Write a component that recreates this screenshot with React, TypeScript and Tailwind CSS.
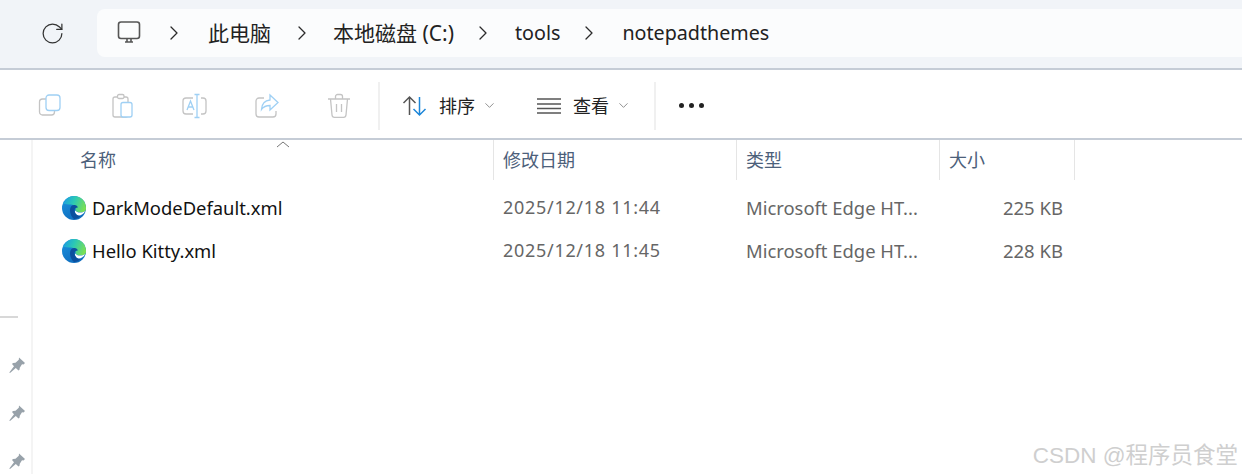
import { ChevronDown, ChevronRight, RotateCw } from "lucide-react";

const cjk = "font-['Noto_Sans','Noto_Sans_CJK_SC',sans-serif]";

const columns = [
  { label: "修改日期", width: "w-[243px]" },
  { label: "类型", width: "w-[203px]" },
  { label: "大小", width: "w-[135px]" },
];

const files = [
  { name: "DarkModeDefault.xml", date: "2025/12/18 11:44", size: "225 KB" },
  { name: "Hello Kitty.xml", date: "2025/12/18 11:45", size: "228 KB" },
];

const EdgeIcon = () => (
  <svg width="24" height="24" viewBox="0 0 24 24" className="shrink-0">
    <defs>
      <linearGradient id="edgeTop" x1="0" y1="0.3" x2="1" y2="0.6">
        <stop offset="0" stopColor="#1b9de2" />
        <stop offset="0.45" stopColor="#2cc9b4" />
        <stop offset="1" stopColor="#7ce052" />
      </linearGradient>
      <linearGradient id="edgeLeft" x1="0" y1="0" x2="0.6" y2="1">
        <stop offset="0" stopColor="#1b94e0" />
        <stop offset="1" stopColor="#0f6cbd" />
      </linearGradient>
    </defs>
    <circle cx="12" cy="12" r="12" fill="url(#edgeLeft)" />
    <path d="M1 8C3 3 7 0 12 0c7 0 12 5.500 12 12 0 1.500-.3 2.500-1 3.200-2.500 1.500-7 1.500-9.500-.5.800-3-1-6.200-4.500-6.200C6 8.500 3 8 1 8Z" fill="url(#edgeTop)" />
    <path d="M13 14.500C15 16.800 19.500 17.300 23 15.200c-1.200 3-5 4.800-7.500 4-1.800-.6-2.800-2.800-2.500-4.700Z" fill="#fff" />
    <path d="M8 14c0-3.500 2.500-5.500 5-5 1.800.3 2.700 1.500 2.800 2.500-2 0-3.300 1-3.300 3 0 2.800 2.500 5.300 6 5.800-2.200 1.800-4.300 3-6.500 2.700C9.500 21 8 17.800 8 14Z" fill="#0c4f9e" />
  </svg>
);

const PinIcon = () => (
  <svg width="16" height="16" viewBox="0 0 16 16" className="text-[#98a2aa]" fill="currentColor">
    <path d="M10 .5 16 6 14.500 7.500 13 7.200 10.800 10.800 10.500 12.800 9.500 13.500 6.800 11 1 16 .3 15.500 5 9.300 3 7 4 6 6.500 5.800 9.800 2.800Z" />
  </svg>
);

const ToolIcon = ({ children }: { children: React.ReactNode }) => (
  <div className="flex h-[48px] w-[72px] items-center justify-center">
    <svg width="26" height="26" viewBox="0 0 26 26" fill="none" strokeWidth="1.300">
      {children}
    </svg>
  </div>
);

const grey = "#c4c4c4";
const blue = "#9fd0f4";

const Crumb = ({ label, className }: { label: string; className: string }) => (
  <div className="flex items-center">
    <ChevronRight className="h-[24px] w-[24px] text-[#2b2b2b]" strokeWidth={1.300} />
    <span className={`leading-none text-[#222] ${className}`}>{label}</span>
  </div>
);

export default function App() {
  return (
    <div className={`relative flex h-[474px] w-[1242px] flex-col overflow-hidden bg-white ${cjk}`}>
      {/* address bar */}
      <div className="flex h-[70px] shrink-0 items-start border-b-2 border-[#c5ccd6] bg-[#f1f4f8] pt-[9px]">
        <div className="flex h-[48px] w-[97px] shrink-0 items-center justify-center pl-[7px]">
          <RotateCw className="h-[25px] w-[25px] text-[#333]" strokeWidth={1.200} />
        </div>
        <div className="flex h-[48px] flex-1 items-center rounded-l-lg bg-[#fbfcfd] pl-[20px]">
          <svg width="24" height="24" viewBox="0 0 24 24" fill="none" stroke="#555" strokeWidth="1.600">
            <rect x="1.500" y="1" width="21" height="16.500" rx="2.500" />
            <path d="M8 21h8M10 18v3M14 18v3" />
          </svg>
          <div className="ml-[21px]">
            <Crumb label="此电脑" className="ml-[22px] text-[21px]" />
          </div>
          <div className="ml-[19px]">
            <Crumb label="本地磁盘 (C:)" className="ml-[19px] text-[21px]" />
          </div>
          <div className="ml-[17px]">
            <Crumb label="tools" className="ml-[20px] text-[19.700px]" />
          </div>
          <div className="ml-[17px]">
            <Crumb label="notepadthemes" className="ml-[21px] text-[19.700px]" />
          </div>
        </div>
      </div>

      {/* toolbar */}
      <div className="flex h-[70px] shrink-0 items-center border-b-2 border-[#c5ccd6] pl-[15px] pt-[3px]">
        <ToolIcon>
          <rect x="1.500" y="6" width="15" height="16" rx="3" stroke={grey} />
          <rect x="8" y="2" width="14" height="15.500" rx="3" fill="#fff" stroke={blue} />
        </ToolIcon>
        <ToolIcon>
          <rect x="3" y="4" width="15" height="20" rx="2" stroke={grey} />
          <rect x="7.500" y="1.500" width="6.500" height="4" rx="1.500" fill="#fff" stroke={grey} />
          <rect x="11" y="9.500" width="11" height="14.500" rx="2" fill="#fff" stroke={blue} />
        </ToolIcon>
        <ToolIcon>
          <path d="M11 5H4a3 3 0 0 0-3 3v10a3 3 0 0 0 3 3h7M19 5h2a3 3 0 0 1 3 3v10a3 3 0 0 1-3 3h-2" stroke={grey} />
          <path d="M12.500 1.500h5M15 1.500v23M12.500 24.500h5" stroke={blue} />
          <path d="M5 17l3.500-9 3.500 9M6.200 14h4.600" stroke={blue} />
        </ToolIcon>
        <ToolIcon>
          <path d="M10 5H5a3 3 0 0 0-3 3v13a3 3 0 0 0 3 3h14a3 3 0 0 0 3-3v-3" stroke={grey} />
          <path d="M16 2l8 7.500-8 7.500v-4.500c-4 0-6.500 1-8.500 4 .3-5.500 3.500-9 8.500-9.500V2Z" stroke={blue} />
        </ToolIcon>
        <ToolIcon>
          <path d="M2 6h22M9.500 6V3.500a2 2 0 0 1 2-2h3a2 2 0 0 1 2 2V6M4.500 6l1.500 16a2.500 2.500 0 0 0 2.500 2.300h9a2.500 2.500 0 0 0 2.500-2.300L21.500 6M10.500 11v8M15.500 11v8" stroke={grey} />
        </ToolIcon>

        <div className="ml-[3px] h-[48px] w-[2px] bg-[#f0f0f0]" />

        <div className="ml-[22px] flex items-center">
          <svg width="26" height="24" viewBox="0 0 26 24" fill="none" strokeWidth="1.500">
            <path d="M7.500 21V3M1.500 9l6-6 6 6" stroke="#555" />
            <path d="M17.500 3v18M11.500 15l6 6 6-6" stroke="#1c86d8" />
          </svg>
          <span className="ml-[11px] text-[18px] leading-none text-[#222]">排序</span>
          <ChevronDown className="ml-[6.500px] h-[15px] w-[15px] text-[#777]" strokeWidth={1.300} />
        </div>

        <div className="ml-[40.500px] flex items-center">
          <svg width="24" height="18" viewBox="0 0 24 18" fill="none" stroke="#555" strokeWidth="1.500">
            <path d="M0 2h24M0 7h24M0 11.500h24M0 16h24" />
          </svg>
          <span className="ml-[12px] text-[18px] leading-none text-[#222]">查看</span>
          <ChevronDown className="ml-[6.500px] h-[15px] w-[15px] text-[#777]" strokeWidth={1.300} />
        </div>

        <div className="ml-[23.500px] h-[48px] w-[2px] bg-[#f0f0f0]" />

        <div className="ml-[23px] flex items-center gap-[5px]">
          <span className="h-[5px] w-[5px] rounded-full bg-[#222]" />
          <span className="h-[5px] w-[5px] rounded-full bg-[#222]" />
          <span className="h-[5px] w-[5px] rounded-full bg-[#222]" />
        </div>
      </div>

      <div className="flex flex-1">
        {/* nav pane */}
        <div className="flex w-[33px] shrink-0 flex-col border-r-2 border-[#f4f4f4]">
          <div className="mt-[176px] h-[2px] w-[18px] bg-[#d8d8d8]" />
          <div className="mt-[39px] flex flex-col gap-[32px] pl-[9px]">
            <PinIcon />
            <PinIcon />
            <PinIcon />
          </div>
        </div>

        {/* file list */}
        <div className="relative flex-1">
          <svg width="14" height="7" viewBox="0 0 14 7" fill="none" stroke="#777" className="absolute left-[243px] top-[1px]">
            <path d="M1 6l6-5 6 5" />
          </svg>
          <div className="flex h-[40px] text-[18px] text-[#4c607a]">
            <div className="flex w-[460px] items-center pl-[47px]">名称</div>
            {columns.map((c) => (
              <div key={c.label} className={`flex items-center border-l border-[#e5e5e5] pl-[9px] ${c.width}`}>
                {c.label}
              </div>
            ))}
            <div className="border-l border-[#e5e5e5]" />
          </div>
          <div className="mt-[7px] flex flex-col">
            {files.map((f) => (
              <div key={f.name} className="flex h-[43px] items-center">
                <div className="flex w-[460px] items-center pl-[29px]">
                  <EdgeIcon />
                  <span className="ml-[6px] -translate-y-px text-[18.400px] text-[#111]">{f.name}</span>
                </div>
                <div className="w-[243px] -translate-y-px pl-[10px] text-[18px] tracking-[0.700px] text-[#666]">{f.date}</div>
                <div className="w-[203px] -translate-y-px pl-[10px] text-[18.400px] text-[#666]">Microsoft Edge HT...</div>
                <div className="w-[135px] -translate-y-px pr-[11px] text-right text-[18.500px] text-[#666]">{f.size}</div>
              </div>
            ))}
          </div>
        </div>
      </div>

      {/* watermark */}
      <div className="absolute bottom-[7px] right-[4px] text-[22.500px] leading-none text-[#cfcfcf] font-['Liberation_Sans','Noto_Sans_CJK_SC',sans-serif]">
        CSDN @程序员食堂
      </div>
    </div>
  );
}
